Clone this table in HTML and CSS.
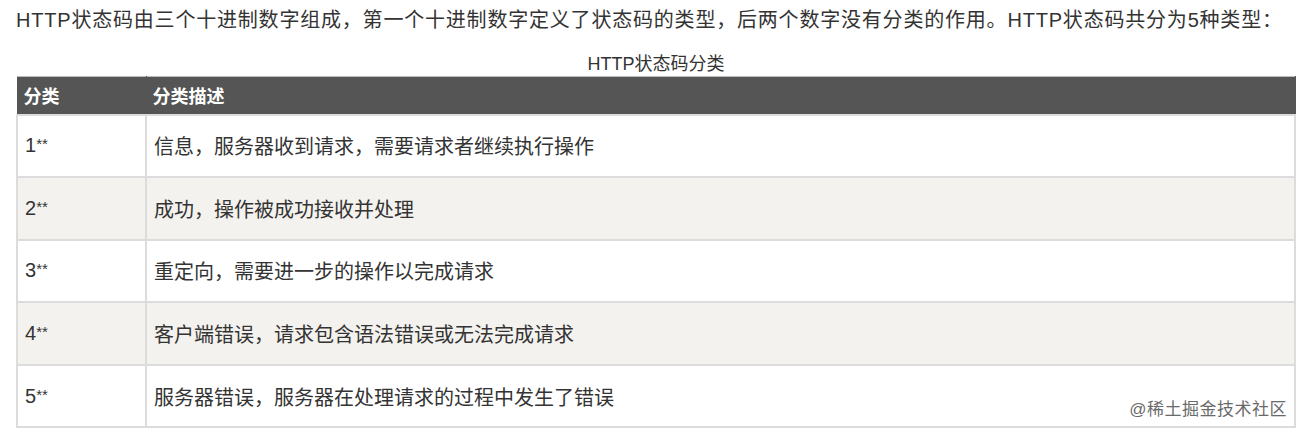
FILE: index.html
```html
<!DOCTYPE html>
<html lang="zh">
<head>
<meta charset="utf-8">
<link rel="stylesheet" href="styles.css">
</head>
<body>
<div class="page">
  <p class="intro">HTTP状态码由三个十进制数字组成，第一个十进制数字定义了状态码的类型，后两个数字没有分类的作用。HTTP状态码共分为5种类型：</p>
  <table class="codes">
    <caption>HTTP状态码分类</caption>
    <thead>
      <tr><th class="c1">分类</th><th>分类描述</th></tr>
    </thead>
    <tbody>
      <tr><td class="c1">1<span class="ast">**</span></td><td>信息，服务器收到请求，需要请求者继续执行操作</td></tr>
      <tr><td class="c1">2<span class="ast">**</span></td><td>成功，操作被成功接收并处理</td></tr>
      <tr><td class="c1">3<span class="ast">**</span></td><td>重定向，需要进一步的操作以完成请求</td></tr>
      <tr><td class="c1">4<span class="ast">**</span></td><td>客户端错误，请求包含语法错误或无法完成请求</td></tr>
      <tr><td class="c1">5<span class="ast">**</span></td><td>服务器错误，服务器在处理请求的过程中发生了错误</td></tr>
    </tbody>
  </table>
  <div class="watermark">@稀土掘金技术社区</div>
</div>
</body>
</html>
```
FILE: styles.css
```css
html, body {
  margin: 0;
  padding: 0;
  background: #fff;
}
.page {
  position: relative;
  padding: 0 8px 0 16px;
  font-family: "Liberation Sans", "Noto Sans CJK SC", sans-serif;
  color: #333;
}
.intro {
  margin: 0;
  padding-top: 8px;
  font-size: 20px;
  letter-spacing: 0.8px;
  line-height: 24px;
  white-space: nowrap;
}
.codes {
  width: 1280px;
  border-collapse: collapse;
  margin-top: 0;
}
.codes caption {
  font-size: 18px;
  line-height: 24px;
  padding: 20px 0 0;
  color: #333;
}
.codes th {
  background: #555;
  color: #fff;
  font-size: 18px;
  font-weight: bold;
  text-align: left;
  height: 38px;
  padding: 0 6px;
  box-sizing: border-box;
  border: 1px solid #555;
  border-top-color: #bbb;
}
.codes td {
  font-size: 20px;
  height: 62.6px;
  padding: 0 7px;
  box-sizing: border-box;
  border: 2px solid #dcdcdc;
  vertical-align: middle;
}
.codes .ast {
  font-size: 15px;
  vertical-align: 3px;
}
.codes tbody tr:nth-child(even) td {
  background: #f3f2ee;
}
.codes .c1 {
  width: 129px;
}
.watermark {
  position: absolute;
  right: 17px;
  top: 398px;
  font-size: 17px;
  line-height: 24px;
  color: #6a6a6a;
  letter-spacing: 0.5px;
}
```
